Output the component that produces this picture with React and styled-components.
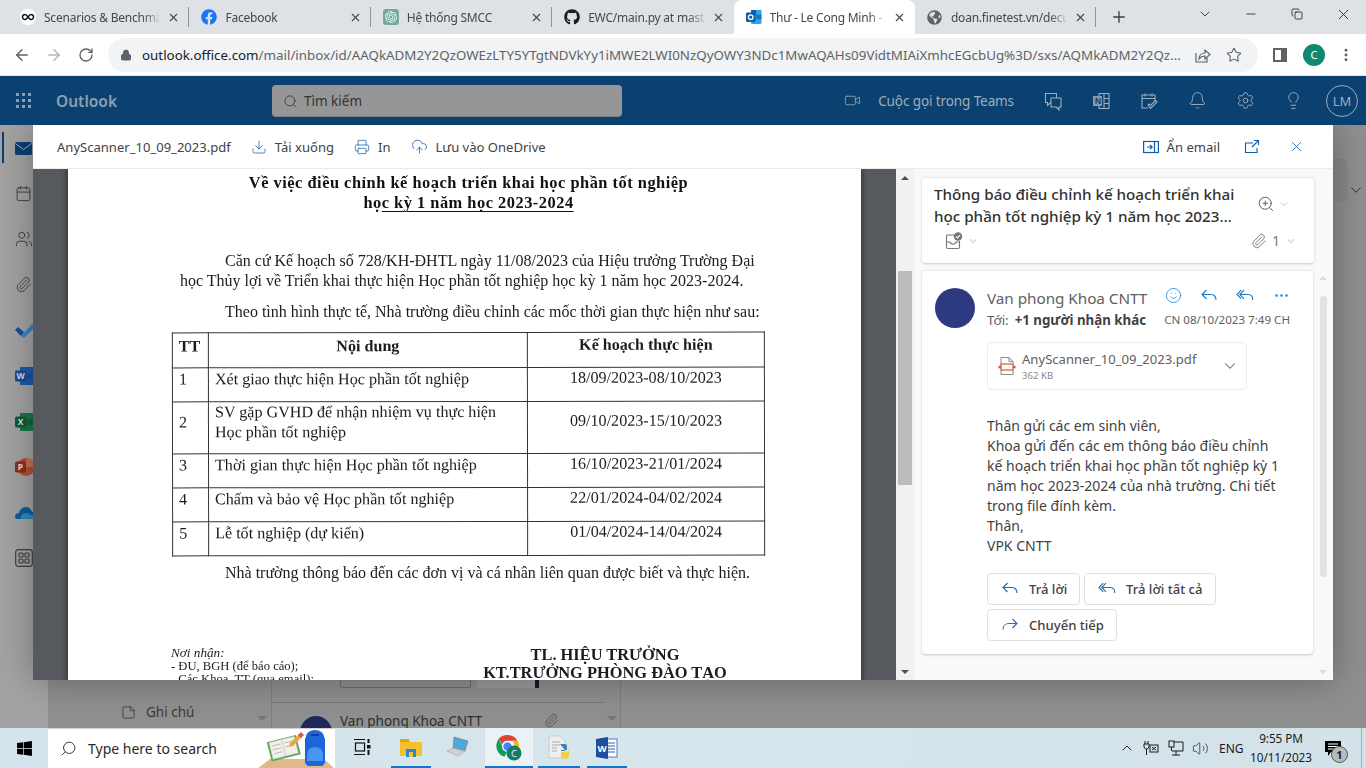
import React from "react";
import styled, { createGlobalStyle } from "styled-components";
import {
  ArrowLeft, ArrowRight, RotateCw, Lock, Star, Minus, X, Plus, Search, Video, Bell, Settings,
  Lightbulb, ChevronDown, ChevronUp, Download, Printer, CloudUpload, Paperclip, ZoomIn, Smile,
  MoreHorizontal, MoreVertical, Copy, Calendar, Users, StickyNote, Volume2,
} from "lucide-react";
import { FaFacebook, FaGithub, FaGlobeAmericas, FaWindows } from "react-icons/fa";
import { SiOpenai } from "react-icons/si";

const Global = createGlobalStyle`
  html, body { margin: 0; padding: 0; width: 1366px; height: 768px; overflow: hidden; background: #8c8c8c; }
  * { box-sizing: border-box; }
`;

const UI = `"Noto Sans", "Open Sans", sans-serif`;

const Screen = styled.div`
  width: 1366px; height: 768px; display: flex; flex-direction: column; overflow: hidden;
  font-family: ${UI};
`;

/* ---------- browser tabs ---------- */
const TabStrip = styled.div`
  height: 34px; background: #dee1e6; display: flex; align-items: stretch; padding-left: 8px; flex: none;
`;
const Tab = styled.div`
  width: 181.4px; display: flex; align-items: center; padding: 0 9px 0 12px; gap: 8px; position: relative;
  background: ${p => (p.$active ? "#fff" : "transparent")};
  border-radius: ${p => (p.$active ? "8px 8px 0 0" : "0")};
  &::after {
    content: ""; position: absolute; right: 0; top: 7px; bottom: 7px; width: 1px;
    background: ${p => (p.$sep ? "#8f9296" : "transparent")};
  }
`;
const FavSlot = styled.span`
  width: 16px; height: 16px; flex: none; display: flex; align-items: center; justify-content: center;
`;
const GptTile = styled.span`
  width: 16px; height: 16px; border-radius: 3px; background: #75a99c; color: #eef6f3; display: flex; align-items: center; justify-content: center;
`;
const TabTitle = styled.span`
  flex: 1; font-size: 12px; color: #45474a; white-space: nowrap; overflow: hidden; letter-spacing: -0.22px;
  -webkit-mask-image: linear-gradient(90deg, #000 86%, rgba(0,0,0,.15) 100%);
  mask-image: linear-gradient(90deg, #000 86%, rgba(0,0,0,.15) 100%);
`;
const NewTab = styled.div`
  width: 46px; display: flex; align-items: center; justify-content: center; color: #3c4043;
`;
const WinControls = styled.div`
  margin-left: auto; display: flex; align-items: center; color: #1f1f1f; height: 28px;
`;
const WinBtn = styled.div`
  width: 46px; display: flex; justify-content: center; align-items: center;
`;

/* ---------- address bar ---------- */
const AddressBar = styled.div`
  height: 42px; background: #fff; display: flex; align-items: center; flex: none; padding-left: 6px;
  border-bottom: 1px solid #e3e3e3;
`;
const NavBtn = styled.div`
  width: 32px; display: flex; justify-content: center; color: ${p => (p.$off ? "#b4b6b9" : "#5f6368")};
`;
const Omnibox = styled.div`
  margin-left: 6px; width: 1150px; height: 34px; border-radius: 17px; background: #f1f3f4;
  display: flex; align-items: center; padding: 0 2px 0 12px; font-size: 13.35px; color: #5f6368;
`;
const LockSlot = styled.div`
  width: 22px; flex: none; display: flex;
`;
const Url = styled.div`
  width: 1044px; flex: none; white-space: nowrap; overflow: hidden;
  b { font-weight: 400; color: #202124; }
`;
const OmniIcon = styled.div`
  width: 32px; display: flex; justify-content: center; color: #5f6368; flex: none;
`;
const SidePanelIcon = styled.div`
  margin-left: 15px; width: 14px; height: 14px; border: 2px solid #5f6368; border-right-width: 6px; flex: none;
`;
const Profile = styled.div`
  margin-left: 16px; width: 22px; height: 22px; border-radius: 50%; background: #0f8a70; color: #fff;
  display: flex; align-items: center; justify-content: center; font-size: 11px; flex: none;
`;
const Kebab = styled.div`
  margin-left: 9px; width: 24px; display: flex; justify-content: center; color: #5f6368;
`;

/* ---------- dimmed Outlook header ---------- */
const AppBar = styled.div`
  height: 49px; background: #0b4170; flex: none; display: flex; align-items: center; color: #a0aeba;
`;
const Waffle = styled.div`
  width: 48px; padding-left: 16px; display: grid; grid-template-columns: repeat(3, 3px); gap: 3px;
  span { width: 3px; height: 3px; background: #8d9dab; }
`;
const Brand = styled.div`
  width: 224px; padding-left: 8px; font-weight: 600; font-size: 15.5px; color: #8ea0af;
`;
const SearchBox = styled.div`
  width: 350px; height: 32px; background: #969696; border-radius: 4px; display: flex; align-items: center;
  gap: 6px; padding: 2px 0 0 11px; font-size: 13.5px; color: #333; border-bottom: 1px solid #7c7f82;
`;
const AppBarRight = styled.div`
  margin-left: auto; display: flex; align-items: center; padding-right: 8px;
`;
const TeamsCall = styled.div`
  display: flex; align-items: center; gap: 17px; font-size: 13.5px; margin-right: 15px; letter-spacing: -0.1px;
`;
const HeaderIcon = styled.div`
  width: 48px; display: flex; justify-content: center;
`;
const Initials = styled.div`
  width: 32px; height: 32px; border-radius: 50%; border: 1px solid #9aa9b5; font-size: 13px; margin-left: 9px;
  display: flex; align-items: center; justify-content: center;
`;

/* ---------- dimmed Outlook body ---------- */
const Body = styled.div`
  height: 603px; flex: none; position: relative; display: flex; background: #8f8f8f; overflow: hidden;
`;
const Rail = styled.div`
  width: 48px; flex: none; background: #a3a3a3; padding-top: 12px; display: flex; flex-direction: column;
  align-items: flex-start; padding-left: 15px; position: relative;
`;
const RailMark = styled.div`
  position: absolute; left: 2px; top: 7px; width: 2px; height: 31px; background: #0c4272;
`;
const RailIcon = styled.div`
  height: 22px; margin-bottom: 23.6px; display: flex; align-items: center; color: #3f3f3f;
`;
const NavPane = styled.div`
  width: 223px; flex: none; display: flex; align-items: flex-end; justify-content: space-between;
  padding: 0 4px 7px 73px; color: #3a3a3a; font-size: 13.5px;
`;
const NavNote = styled.div`
  display: flex; align-items: center; gap: 10px;
`;
const ArrowDown = styled.div`
  width: 0; height: 0; border: 5px solid transparent; border-top: 5px solid ${p => p.$c || "#777"}; margin-bottom: -5px; flex: none;
`;
const ListPane = styled.div`
  width: 350px; flex: none; border: 1px solid #808080; border-width: 0 1px; display: flex; flex-direction: column;
  justify-content: flex-end; overflow: hidden; position: relative;
`;
const ListAttach = styled.div`
  display: flex; gap: 6px; padding-left: 68px; height: 40px;
`;
const ListBox = styled.div`
  width: 131px; border: 1px solid #6e6e6e; height: 100%; border-radius: 2px;
`;
const ListThumb = styled.div`
  width: 62px; height: 100%; background: linear-gradient(90deg, #9c9c9c 0 93%, #141a2d 93%);
`;
const ListDivider = styled.div`
  margin: 14px 16px 0 0; height: 1px; background: #757575;
`;
const ListRow = styled.div`
  height: 25px; display: flex; gap: 8px; padding: 13px 0 0 28px; font-size: 13.5px; color: #2e2e2e; overflow: visible; line-height: 14px;
`;
const MiniAvatar = styled.div`
  width: 32px; height: 32px; border-radius: 50%; background: #1f2a5a; flex: none;
`;
const ListName = styled.span`
  width: 196px; white-space: nowrap; margin-top: -2px;
`;
const ListTail = styled.div`
  display: flex; gap: 48px; margin-top: -3px; color: #444;
`;
const ListArrow = styled.div`
  width: 0; height: 0; border: 5px solid transparent; border-top: 5px solid #777; margin-top: 3px; flex: none;
`;
const ReadPane = styled.div`
  flex: 1; display: flex; justify-content: flex-end; align-items: flex-start; gap: 1px;
`;
const DimPanel = styled.div`
  width: 46px; height: 41px; margin: 35px 0 0; border-radius: 4px; background: #8a8a8a; box-shadow: 0 0 2px rgba(0,0,0,.2);
`;
const DimChevron = styled.div`
  margin: 56px 1px 0 0; height: 18px; color: #2c2c2c;
`;
const ReadSpacer = styled.div`
  flex: 1;
`;

/* ---------- attachment modal ---------- */
const Modal = styled.div`
  position: absolute; left: 33px; top: 0; width: 1300px; height: 555px; background: #fff; display: flex; flex-direction: column;
  box-shadow: 0 0 34px rgba(0, 0, 0, .32); overflow: hidden;
`;
const ModalBar = styled.div`
  height: 44px; flex: none; display: flex; align-items: center; padding: 0 28px 0 24px; border-bottom: 1px solid #edebe9;
  font-size: 13.05px; color: #424242;
`;
const FileName = styled.span`
  margin-right: 20px;
`;
const BarAction = styled.div`
  display: flex; align-items: center; gap: ${p => p.$gap || 8}px; margin-right: ${p => p.$mr ?? 20}px; color: #424242;
  svg { color: #0f5ca8; flex: none; }
`;
const BarRight = styled.div`
  margin-left: auto; display: flex; align-items: center;
`;
const ModalMain = styled.div`
  flex: 1; display: flex; min-height: 0;
`;
const Viewer = styled.div`
  width: 863px; flex: none; background: #565a5e; display: flex; justify-content: center; overflow: hidden;
`;

/* ---------- scanned document ---------- */
const Paper = styled.div`
  width: 793px; height: 100%; background: #fff; padding: 4px 0 0 0; overflow: hidden; flex: none;
  font-family: "Liberation Serif", serif; color: #1c1c1c; box-shadow: -3px 0 3px rgba(0,0,0,.25), 3px 0 3px rgba(0,0,0,.25);
  filter: blur(0.25px);
`;
const DocTitle = styled.div`
  text-align: center; font-weight: 700; font-size: 16.4px; letter-spacing: .5px; line-height: 20px; color: #111;
  padding-left: 8px; white-space: nowrap;
  u { text-decoration-thickness: 1px; text-underline-offset: 3px; }
`;
const DocPara = styled.p`
  margin: ${p => p.$mt || 0}px 0 0 ${p => p.$ml}px; font-size: 16px; line-height: 20px; white-space: nowrap;
`;
const DocTable = styled.table`
  margin: 10px 0 0 104px; width: 592px; border-collapse: collapse; table-layout: fixed; font-size: 16.1px;
  transform: rotate(-0.08deg); line-height: 20px;
  td, th { border: 1px solid #333; padding: 0 6px 11px; vertical-align: middle; }
  th { font-weight: 700; text-align: center; padding-bottom: 8px; }
  th:first-child { text-align: left; }
  th:last-child { padding-bottom: 10px; }
`;
const Row = styled.tr`
  height: ${p => p.$h}px;
`;
const DateCell = styled.td`
  text-align: center; padding-bottom: 13px !important;
`;
const Sign = styled.div`
  margin-top: 63px; display: flex; font-size: 12.6px; line-height: 13.5px;
`;
const Recipients = styled.div`
  width: 300px; padding: 0 0 0 103px; white-space: nowrap;
  i { display: block; font-size: 13.2px; }
  span { display: block; }
`;
const Signer = styled.div`
  width: 300px; margin-left: 87px; text-align: center; font-weight: 700; font-size: 16.4px; line-height: 18px; white-space: nowrap;
`;

/* ---------- scrollbars ---------- */
const ScrollBar = styled.div`
  width: ${p => p.$w}px; flex: none; display: flex; flex-direction: column; align-items: center; background: ${p => p.$bg};
  justify-content: space-between; padding: ${p => p.$pad};
`;
const Thumb = styled.div`
  width: ${p => p.$w}px; height: ${p => p.$h}px; background: ${p => p.$c}; margin-top: ${p => p.$mt}px; border-radius: ${p => p.$r || 0}px; margin-bottom: auto;
`;
const ArrowUp = styled.div`
  width: 0; height: 0; border: 4px solid transparent; border-top: 0; border-bottom: 4px solid ${p => p.$c};
  flex: none;
`;
const ArrowDn = styled.div`
  width: 0; height: 0; border: 4px solid transparent; border-bottom: 0; border-top: 4px solid ${p => p.$c};
  flex: none;
`;

/* ---------- reading pane ---------- */
const Reading = styled.div`
  flex: 1; background: #faf9f8; display: flex; min-width: 0;
`;
const ReadingCol = styled.div`
  width: 399px; flex: none; padding: 9px 0 0 8px; display: flex; flex-direction: column; gap: 8px;
`;
const Card = styled.div`
  background: #fff; border-radius: 4px; box-shadow: 0 0.5px 2.5px rgba(0,0,0,.2); width: ${p => p.$w}px; flex: none;
`;
const SubjectCard = styled(Card)`
  height: 85px; padding: 5px 12px 0 12px; position: relative;
`;
const SubjectTop = styled.div`
  display: flex; justify-content: space-between;
`;
const Subject = styled.div`
  width: 302px; font-size: 15.2px; line-height: 22px; font-weight: 500; color: #323130;
  display: -webkit-box; -webkit-line-clamp: 2; -webkit-box-orient: vertical; overflow: hidden;
`;
const ZoomBox = styled.div`
  display: flex; align-items: center; gap: 3px; color: #424242; height: 44px; margin-right: 12px; margin-top: -1px;
`;
const SubjectMeta = styled.div`
  display: flex; justify-content: space-between; align-items: center; padding: 0 5px 0 11px; margin-top: 5px; color: #777; font-size: 13.5px;
`;
const MetaGroup = styled.div`
  display: flex; align-items: center; gap: ${p => p.$gap || 5}px;
`;
const MailCard = styled(Card)`
  height: 383px; padding: 17px 12px 0 13px;
`;
const SenderRow = styled.div`
  display: flex; gap: 12px;
`;
const Avatar = styled.div`
  width: 40px; height: 40px; border-radius: 50%; background: #2c3a82; flex: none;
`;
const SenderInfo = styled.div`
  flex: 1; min-width: 0; margin-top: -1px;
`;
const SenderTop = styled.div`
  display: flex; align-items: center; justify-content: space-between; height: 22px; white-space: nowrap;
`;
const SenderName = styled.span`
  font-size: 15.3px; color: #616161; letter-spacing: -0.05px;
`;
const Actions = styled.div`
  display: flex; color: #1b7cc9; margin: -4px 2px 0 0;
`;
const ActionBtn = styled.div`
  width: 36px; display: flex; justify-content: center;
`;
const SenderBottom = styled.div`
  display: flex; justify-content: space-between; align-items: center; font-size: 13.3px; color: #616161; white-space: nowrap; margin-top: 2px; line-height: 18px;
  b { color: #424242; font-weight: 700; margin-left: 6px; }
`;
const SentDate = styled.span`
  font-size: 11.6px; padding-right: 11px;
`;
const ToLabel = styled.span`
  font-size: 13.3px;
`;
const AttachCard = styled.div`
  margin: 13px 0 0 52px; width: 260px; height: 48px; border: 1px solid #ebebeb; border-radius: 4px; display: flex; align-items: center;
  padding: 0 7px 0 10px; gap: 6px;
`;
const AttachInfo = styled.div`
  flex: 1; min-width: 0;
`;
const AttachName = styled.div`
  font-size: 13.1px; color: #616161; line-height: 18px;
`;
const AttachSize = styled.div`
  font-size: 9.6px; color: #8a8886; line-height: 14px; margin-top: 1px;
`;
const MailBody = styled.div`
  margin: 26px 0 0 52px; width: 300px; font-size: 14px; line-height: 20px; color: #424242;
`;
const ReplyBar = styled.div`
  margin: 17px 0 0 52px; display: flex; flex-wrap: wrap; gap: 4px; width: 300px;
`;
const ReplyBtn = styled.div`
  height: 32px; border: 1px solid #e1dfdd; border-radius: 4px; display: flex; align-items: center; padding: 0 13px; gap: 10px;
  font-size: 13.1px; font-weight: 500; color: #424242; width: ${p => p.$w}px; white-space: nowrap;
  svg { color: #2b6aa8; flex: none; }
`;

/* ---------- windows taskbar ---------- */
const Taskbar = styled.div`
  height: 40px; flex: none; display: flex; align-items: stretch;
  background: linear-gradient(90deg, #d3e3eb, #d7e6ec 50%, #d3e2e9);
`;
const StartBtn = styled.div`
  width: 48px; display: flex; align-items: center; justify-content: center; color: #000; flex: none;
`;
const TaskSearch = styled.div`
  width: 287px; background: #fff; display: flex; align-items: center; padding-left: 12px; gap: 11px; flex: none;
  font-size: 14px; color: #2a2a2a; position: relative; border-top: 1px solid #d0d0d0; overflow: hidden;
`;
const FlipSearch = styled(Search)`
  transform: scaleX(-1);
`;
const Illustration = styled.div`
  margin-left: auto; height: 40px; width: 78px; flex: none;
`;
const TaskItem = styled.div`
  width: ${p => p.$w || 49}px; display: flex; align-items: center; justify-content: center; flex: none; margin-right: ${p => p.$mr || 0}px;
  background: ${p => (p.$on ? "#eaf2f5" : "transparent")};
  border-bottom: 2px solid ${p => (p.$run ? "#0a78d4" : "transparent")};
  padding: ${p => (p.$run ? "2px 0 0" : "0")};
`;
const Tray = styled.div`
  margin-left: auto; display: flex; align-items: center; color: #1b1b1b; font-size: 12px; height: 100%;
`;
const TrayIcon = styled.div`
  width: 24.5px; display: flex; justify-content: center;
`;
const Clock = styled.div`
  width: 64px; text-align: center; line-height: 19px; margin-left: 6px; font-size: 11.8px; letter-spacing: -0.1px;
`;
const Lang = styled.span`
  margin-left: 6px; width: 24px; font-size: 12px;
`;
const Notify = styled.div`
  width: 40px; height: 40px; display: flex; align-items: center; justify-content: center; position: relative; margin-right: 8px;
`;
const NotifyBadge = styled.span`
  position: absolute; left: 18px; top: 18px; width: 17px; height: 17px; border-radius: 50%; background: #b4bcc0; border: 1px solid #555;
  font-size: 11px; font-weight: 700; display: flex; align-items: center; justify-content: center; color: #222;
`;
const ShowDesktop = styled.div`
  width: 5px; height: 100%; border-left: 1px solid #9fb0b8;
`;

/* ---------- drawn icons ---------- */
const S = ({ s = 16, children, ...r }) => (
  <svg width={s} height={s} viewBox={`0 0 ${s} ${s}`} fill="none" stroke="currentColor" strokeWidth="1" {...r}>{children}</svg>
);
const InfinityFav = () => (
  <svg width="16" height="16" viewBox="0 0 16 16"><circle cx="8" cy="8" r="8" fill="#fff" /><path d="M8 8c-1.4-2-2-2.5-3-2.5a2.5 2.5 0 0 0 0 5c1 0 1.6-.5 3-2.5s2-2.5 3-2.5a2.5 2.5 0 0 1 0 5c-1 0-1.6-.5-3-2.5z" fill="none" stroke="#111" strokeWidth="1.5" /></svg>
);
const OutlookFav = () => (
  <svg width="16" height="16" viewBox="0 0 16 16">
    <rect x="5" y="1" width="10.5" height="14" rx="1" fill="#28a8ea" /><rect x="5" y="1" width="5.2" height="4.6" fill="#0364b8" /><rect x="10.2" y="5.6" width="5.3" height="4.6" fill="#14447d" opacity=".5" />
    <rect x="0" y="3.5" width="9.5" height="9.5" rx="1" fill="#0a5dab" /><circle cx="4.7" cy="8.2" r="2.3" fill="none" stroke="#fff" strokeWidth="1.3" />
  </svg>
);
const ReplyIcon = ({ s = 18 }) => (
  <svg width={s} height={s} viewBox="0 0 18 18" fill="none" stroke="currentColor" strokeWidth="1.1">
    <path d="M2 7.5h9c3 0 5 2.2 5 5.5" /><path d="M6.5 3 2 7.5 6.5 12" />
  </svg>
);
const ReplyAllIcon = ({ s = 18 }) => (
  <svg width={s} height={s} viewBox="0 0 18 18" fill="none" stroke="currentColor" strokeWidth="1.1">
    <path d="M4 7.5h8c3 0 4.8 2.2 4.8 5.5" /><path d="M8 3.2 3.8 7.5 8 11.8" /><path d="M5.2 3.2 1 7.5l4.2 4.3" />
  </svg>
);
const ForwardIcon = ({ s = 18 }) => (
  <svg width={s} height={s} viewBox="0 0 18 18" fill="none" stroke="currentColor" strokeWidth="1.1">
    <path d="M16 7.5H8c-3.2 0-6 2.2-6 6" /><path d="M11.5 3 16 7.5 11.5 12" />
  </svg>
);
const ShareIcon = () => (
  <S s={18} strokeWidth="1.2"><path d="M3 7v9h11v-4" /><path d="M6 13c0-4 3-6 6-6V4l5 4.5-5 4.5v-3c-2.500 0-4.500 1-6 3z" /></S>
);
const TeamsChat = () => (
  <S s={20} strokeWidth="1.1"><path d="M2.500 2.500h11v9h-6l-3 3v-3h-2z" /><path d="M8 7h10v9h-2v3l-3-3H8z" fill="#0b4170" /></S>
);
const OneNoteIcon = () => (
  <S s={20} strokeWidth="1.1"><rect x="8" y="2.500" width="10" height="15" /><path d="M13 2.500v15M13 7.500h5M13 12.500h5" /><rect x="2" y="5" width="9" height="10" fill="#8b97a2" stroke="none" /><text x="3.800" y="13" fontSize="8" fill="#0b4170" stroke="none" fontFamily="Noto Sans" fontWeight="700">N</text></S>
);
const TaskIcon = () => (
  <S s={20} strokeWidth="1.1"><path d="M9 17H3V4h13v6" /><path d="M3 7.500h13M6 2.500v3M13 2.500v3" /><path d="m9 14 2.500 3.500L18 11l-1.500-1.500-5 5-1.200-1.500z" /></S>
);
const PanelIcon = () => (
  <S s={16} strokeWidth="1.2"><rect x=".6" y="2.500" width="14.800" height="11" /><path d="M11.500 2.500v11" /><path d="M4 8h5M7 5.800 9.200 8 7 10.200" /></S>
);
const PopOut = () => (
  <S s={16} strokeWidth="1.1"><path d="M9 4H1.500v9.500H13V9" /><path d="M8 8l6-6M10 1.500h4.500V6" /></S>
);
const AppsIcon = () => (
  <S s={18} strokeWidth="1.2"><rect x=".7" y=".7" width="16.600" height="16.600" rx="2.500" /><rect x="4" y="4" width="4" height="4" rx="1" /><rect x="10" y="4" width="4" height="4" rx="1" /><rect x="4" y="10" width="4" height="4" rx="1" /><rect x="10" y="10" width="4" height="4" rx="1" /></S>
);
const Envelope = () => (
  <svg width="17" height="13" viewBox="0 0 17 13"><rect width="17" height="13" rx="1.500" fill="#0c3f74" /><path d="m0.500 1.500 8 6 8-6" fill="none" stroke="#9fb4c8" strokeWidth="1" /></svg>
);
const TodoIcon = () => (
  <svg width="20" height="16" viewBox="0 0 20 16"><path d="m0 8 3-3 6 5-3 4z" fill="#1a4d9e" /><path d="m6 14 11-12 3 3L9 16z" fill="#3b82c4" /></svg>
);
const OfficeTile = ({ bg, tile, l }) => (
  <svg width="20" height="20" viewBox="0 0 20 20">
    <rect x="5" y="1" width="15" height="18" rx="1" fill={bg} />
    <rect x="5" y="7" width="15" height="6" fill={tile} opacity=".7" />
    <rect x="0" y="4.500" width="11" height="11" rx="1.500" fill={tile} />
    <text x="5.500" y="13" fontSize="8.500" fontWeight="700" textAnchor="middle" fontFamily="Noto Sans" fill="#ddd">{l}</text>
  </svg>
);
const PptTile = () => (
  <svg width="20" height="20" viewBox="0 0 20 20">
    <circle cx="11" cy="10" r="9" fill="#a9513a" /><path d="M11 1a9 9 0 0 1 9 9h-9z" fill="#c76f55" />
    <rect x="0" y="4.500" width="11" height="11" rx="1.500" fill="#8f2f17" />
    <text x="5.500" y="13" fontSize="8.500" fontWeight="700" textAnchor="middle" fontFamily="Noto Sans" fill="#ddd">P</text>
  </svg>
);
const Cloud = () => (
  <svg width="20" height="13" viewBox="0 0 20 13"><path d="M0 10.500C0 8 2 7 4 7c1-4 4-6 7-6 3 0 5 2 6 5 2 0 3 2 3 4s-1 3-2 3H2c-1 0-2-1-2-2.500z" fill="#0a5d9e" /><path d="M6 13c-1-3 1-6 5-6 3 0 6 2 9 4 0 1-1 2-2 2z" fill="#2f86c0" /></svg>
);
const PdfIcon = () => (
  <svg width="18" height="20" viewBox="0 0 18 20" fill="none">
    <path d="M3 8V1.500h8l4 4V8M3 14v4.500h12V14" stroke="#8a8a8a" strokeWidth="1" /><path d="M11 1.500v4h4" stroke="#8a8a8a" strokeWidth="1" />
    <rect x="3" y="8" width="12" height="6" stroke="#d65532" strokeWidth="1.200" /><rect x=".5" y="9.800" width="2.500" height="2.500" fill="#d65532" /><rect x="15" y="9.800" width="2.500" height="2.500" fill="#d65532" />
  </svg>
);
const InboxCheck = () => (
  <svg width="18" height="18" viewBox="0 0 18 18" fill="none" stroke="#777" strokeWidth="1.100">
    <path d="M9 3H2.500a1 1 0 0 0-1 1v11a1.500 1.500 0 0 0 1.500 1.500h10a1.500 1.500 0 0 0 1.500-1.500V9" /><path d="M1.500 10H5c.5 1.500 2 2.200 3 2.200s2.500-.7 3-2.200h3.500" />
    <circle cx="13" cy="4.500" r="4.200" fill="#777" stroke="none" /><path d="m11 4.500 1.500 1.500 2.500-2.800" stroke="#fff" />
  </svg>
);
const TaskView = () => (
  <svg width="18" height="18" viewBox="0 0 18 18" fill="none" stroke="#111" strokeWidth="1.200">
    <path d="M0 1.500h11M0 16.500h11" /><rect x="1.500" y="5" width="9" height="8" /><path d="M14.500 1v4" strokeWidth="2" /><rect x="13" y="7" width="3.500" height="3.500" fill="#111" stroke="none" /><path d="M14.500 12v5" strokeWidth="2" />
  </svg>
);
const Explorer = () => (
  <svg width="24" height="24" viewBox="0 0 24 24"><path d="M1 4h9l2 2h11v14H1z" fill="#f4c02e" /><path d="M1 3h9v3H1z" fill="#e3a11a" /><path d="M7 13h10v8H7z" fill="#2a86d6" /><rect x="10" y="16" width="4" height="5" fill="#f4c02e" /></svg>
);
const Laptop = () => (
  <svg width="24" height="22" viewBox="0 0 24 22"><path d="M8 1l14 4-3 10-12-3z" fill="#4ea9dc" stroke="#777" strokeWidth=".6" /><path d="M1 15l6-3 12 3-7 5z" fill="#cfd2d4" stroke="#999" strokeWidth=".5" /></svg>
);
const ChromeLogo = () => (
  <svg width="28" height="28" viewBox="0 0 28 28">
    <path d="M12.500 1a11.500 11.500 0 0 1 10 5.800H12.500a5.700 5.700 0 0 0-5.300 3.700L3.500 5.100A11.500 11.500 0 0 1 12.500 1z" fill="#db4437" />
    <path d="M3.500 5.100 8 13a5 5 0 0 0 5 3l-3.600 6.800A11.500 11.500 0 0 1 3.500 5.100z" fill="#0f9d58" />
    <path d="M22.500 6.800A11.500 11.500 0 0 1 12.500 24l4.500-8a5.500 5.500 0 0 0 0-9.200z" fill="#f4b400" />
    <circle cx="12.500" cy="12.500" r="4.800" fill="#4285f4" stroke="#fff" strokeWidth="1.200" />
    <circle cx="19" cy="19" r="7.500" fill="#0f7f6c" /><text x="19" y="22.500" fontSize="9.500" textAnchor="middle" fill="#e8f3f1" fontFamily="Noto Sans">C</text>
  </svg>
);
const PyFile = () => (
  <svg width="24" height="26" viewBox="0 0 24 26">
    <path d="M2 1h11l5 5v17H2z" fill="#eee" stroke="#bbb" strokeWidth=".6" /><path d="M5 7h8M5 10h8M5 13h5M5 16h5" stroke="#aaa" />
    <path d="M13 9h5c1.500 0 2 1 2 2v4h-6v1h4v-1" fill="#3f7fb5" /><path d="M22 15v6c0 2-2 3-4 3s-4-1-4-3v-4h6z" fill="#f1cf4a" />
  </svg>
);
const WordApp = () => (
  <svg width="24" height="24" viewBox="0 0 24 24">
    <rect x="7" y="3" width="15" height="18" fill="#fff" stroke="#2b5fb0" strokeWidth=".8" /><path d="M13 7h7M13 10h7M13 13h7M13 16h7" stroke="#2b5fb0" />
    <path d="M1 3l12-2v22L1 21z" fill="#1f4e9e" /><text x="7" y="15.500" fontSize="9.500" fontWeight="700" textAnchor="middle" fill="#fff" fontFamily="Noto Sans">W</text>
  </svg>
);
const Backpack = () => (
  <svg width="78" height="40" viewBox="0 0 78 40">
    <path d="M0 40 13 30h54l11 10z" fill="#dfb98a" />
    <g transform="rotate(-14 28 20)"><rect x="12" y="9" width="30" height="20" fill="#5da653" /><path d="M14 10h13v17H14zM27 10h13v17H27z" fill="#f2f1e7" stroke="#c7c7c7" strokeWidth=".5" /><path d="M16 14h9M16 18h9M29 14h9M29 18h9M16 22h9" stroke="#aaa" strokeWidth=".7" /></g>
    <path d="m33 14 9-9 3 3-9 9-4 1z" fill="#f0a63c" /><path d="m41 6 3-3 3 3-3 3z" fill="#d9534f" />
    <path d="M49 8c0-4 4-7 9-7s9 3 9 7c1 1 1 2 1 4v20c0 3-2 5-4 5H52c-2 0-4-2-4-5V12c0-2 0-3 1-4z" fill="#1d66d8" />
    <path d="M50 27c0-6 3-9 8-9s8 3 8 9v5H50z" fill="#4a95ee" />
    <path d="M54 6h8" stroke="#0f3f99" strokeWidth="2" />
  </svg>
);

const tabs = [
  { t: "Scenarios & Benchma", i: <InfinityFav />, sep: true },
  { t: "Facebook", i: <FaFacebook size={16} color="#1877f2" />, sep: true },
  { t: "Hệ thống SMCC", i: <GptTile><SiOpenai size={12} /></GptTile>, sep: true },
  { t: "EWC/main.py at mast", i: <FaGithub size={16} color="#1c1c1c" /> },
  { t: "Thư - Le Cong Minh -", i: <OutlookFav />, active: true },
  { t: "doan.finetest.vn/decu", i: <FaGlobeAmericas size={15} color="#5f6368" />, sep: true },
];

const rows = [
  { n: "1", c: "Xét giao thực hiện Học phần tốt nghiệp", d: "18/09/2023-08/10/2023", h: 34 },
  { n: "2", c: <>SV gặp GVHD để nhận nhiệm vụ thực hiện<br />Học phần tốt nghiệp</>, d: "09/10/2023-15/10/2023", h: 52 },
  { n: "3", c: "Thời gian thực hiện Học phần tốt nghiệp", d: "16/10/2023-21/01/2024", h: 33 },
  { n: "4", c: "Chấm và bảo vệ Học phần tốt nghiệp", d: "22/01/2024-04/02/2024", h: 34 },
  { n: "5", c: "Lễ tốt nghiệp (dự kiến)", d: "01/04/2024-14/04/2024", h: 34 },
];

export default function App() {
  return (
    <Screen>
      <Global />
      <TabStrip>
        {tabs.map(t => (
          <Tab key={t.t} $active={t.active} $sep={t.sep}>
            <FavSlot>{t.i}</FavSlot>
            <TabTitle>{t.t}</TabTitle>
            <X size={13} strokeWidth={2} color="#45474a" />
          </Tab>
        ))}
        <NewTab><Plus size={18} strokeWidth={1.8} /></NewTab>
        <WinControls>
          <WinBtn><ChevronDown size={16} strokeWidth={1.2} /></WinBtn>
          <WinBtn><Minus size={14} strokeWidth={1.4} /></WinBtn>
          <WinBtn><Copy size={12} strokeWidth={1.6} /></WinBtn>
          <WinBtn><X size={17} strokeWidth={1.2} /></WinBtn>
        </WinControls>
      </TabStrip>

      <AddressBar>
        <NavBtn><ArrowLeft size={18} strokeWidth={2} /></NavBtn>
        <NavBtn $off><ArrowRight size={18} strokeWidth={2} /></NavBtn>
        <NavBtn><RotateCw size={16} strokeWidth={2} /></NavBtn>
        <Omnibox>
          <LockSlot><Lock size={12} fill="#5f6368" strokeWidth={2} /></LockSlot>
          <Url><b>outlook.office.com</b>/mail/inbox/id/AAQkADM2Y2QzOWEzLTY5YTgtNDVkYy1iMWE2LWI0NzQyOWY3NDc1MwAQAHs09VidtMIAiXmhcEGcbUg%3D/sxs/AQMkADM2Y2Qz...</Url>
          <OmniIcon><ShareIcon /></OmniIcon>
          <OmniIcon><Star size={16} strokeWidth={1.6} /></OmniIcon>
        </Omnibox>
        <SidePanelIcon />
        <Profile>C</Profile>
        <Kebab><MoreVertical size={16} strokeWidth={2.4} /></Kebab>
      </AddressBar>

      <AppBar>
        <Waffle>{Array.from({ length: 9 }, (_, i) => <span key={i} />)}</Waffle>
        <Brand>Outlook</Brand>
        <SearchBox><Search size={15} strokeWidth={1.3} />Tìm kiếm</SearchBox>
        <AppBarRight>
          <TeamsCall><Video size={17} strokeWidth={1.1} />Cuộc gọi trong Teams</TeamsCall>
          <HeaderIcon><TeamsChat /></HeaderIcon>
          <HeaderIcon><OneNoteIcon /></HeaderIcon>
          <HeaderIcon><TaskIcon /></HeaderIcon>
          <HeaderIcon><Bell size={19} strokeWidth={1.2} /></HeaderIcon>
          <HeaderIcon><Settings size={19} strokeWidth={1.2} /></HeaderIcon>
          <HeaderIcon><Lightbulb size={19} strokeWidth={1.2} /></HeaderIcon>
          <Initials>LM</Initials>
        </AppBarRight>
      </AppBar>

      <Body>
        <Rail>
          <RailMark />
          <RailIcon><Envelope /></RailIcon>
          <RailIcon><Calendar size={17} strokeWidth={1.3} /></RailIcon>
          <RailIcon><Users size={18} strokeWidth={1.3} /></RailIcon>
          <RailIcon><Paperclip size={17} strokeWidth={1.3} /></RailIcon>
          <RailIcon><TodoIcon /></RailIcon>
          <RailIcon><OfficeTile bg="#1d5ba8" tile="#1a4a96" l="W" /></RailIcon>
          <RailIcon><OfficeTile bg="#1c7548" tile="#0f5a34" l="X" /></RailIcon>
          <RailIcon><PptTile /></RailIcon>
          <RailIcon><Cloud /></RailIcon>
          <RailIcon><AppsIcon /></RailIcon>
        </Rail>
        <NavPane>
          <NavNote><StickyNote size={15} strokeWidth={1.3} />Ghi chú</NavNote>
          <ArrowDown $c="#777" />
        </NavPane>
        <ListPane>
          <ListAttach><ListBox /><ListThumb /></ListAttach>
          <ListDivider />
          <ListRow>
            <MiniAvatar />
            <ListName>Van phong Khoa CNTT</ListName>
            <ListTail><Paperclip size={15} strokeWidth={1.1} /><ListArrow /></ListTail>
          </ListRow>
        </ListPane>
        <ReadPane>
          <ReadSpacer />
          <DimPanel />
          <DimChevron><ChevronDown size={18} strokeWidth={1.3} /></DimChevron>
        </ReadPane>

        <Modal>
          <ModalBar>
            <FileName>AnyScanner_10_09_2023.pdf</FileName>
            <BarAction><Download size={16} strokeWidth={1.1} />Tải xuống</BarAction>
            <BarAction><Printer size={16} strokeWidth={1.1} />In</BarAction>
            <BarAction><CloudUpload size={17} strokeWidth={1.1} />Lưu vào OneDrive</BarAction>
            <BarRight>
              <BarAction $mr={24}><PanelIcon />Ẩn email</BarAction>
              <BarAction $mr={28}><PopOut /></BarAction>
              <BarAction $mr={0}><X size={17} strokeWidth={1.1} /></BarAction>
            </BarRight>
          </ModalBar>
          <ModalMain>
            <Viewer>
              <Paper>
                <DocTitle>Về việc điều chỉnh kế hoạch triển khai học phần tốt nghiệp</DocTitle>
                <DocTitle>họ<u>c kỳ 1 năm học 2023-2024</u></DocTitle>
                <DocPara $ml={157} $mt={38}>Căn cứ Kế hoạch số 728/KH-ĐHTL ngày 11/08/2023 của Hiệu trưởng Trường Đại</DocPara>
                <DocPara $ml={112}>học Thủy lợi về Triển khai thực hiện Học phần tốt nghiệp học kỳ 1 năm học 2023-2024.</DocPara>
                <DocPara $ml={157} $mt={11}>Theo tình hình thực tế, Nhà trường điều chỉnh các mốc thời gian thực hiện như sau:</DocPara>
                <DocTable>
                  <colgroup><col width="36" /><col width="319" /><col width="237" /></colgroup>
                  <tbody>
                    <Row $h={35}><th>TT</th><th>Nội dung</th><th>Kế hoạch thực hiện</th></Row>
                    {rows.map(r => (
                      <Row key={r.n} $h={r.h}><td>{r.n}</td><td>{r.c}</td><DateCell>{r.d}</DateCell></Row>
                    ))}
                  </tbody>
                </DocTable>
                <DocPara $ml={157} $mt={7}>Nhà trường thông báo đến các đơn vị và cá nhân liên quan được biết và thực hiện.</DocPara>
                <Sign>
                  <Recipients><i>Nơi nhận:</i><span>- ĐU, BGH (để báo cáo);</span><span>- Các Khoa, TT (qua email);</span></Recipients>
                  <Signer><div>TL. HIỆU TRƯỞNG</div><div>KT.TRƯỞNG PHÒNG ĐÀO TẠO</div></Signer>
                </Sign>
              </Paper>
            </Viewer>
            <ScrollBar $w={18} $bg="#f1f1f1" $pad="7px 0 6px">
              <ArrowUp $c="#505050" />
              <Thumb $w={14} $h={214} $c="#bcbcbc" $mt={91} />
              <ArrowDn $c="#505050" />
            </ScrollBar>
            <Reading>
              <ReadingCol>
                <SubjectCard $w={392}>
                  <SubjectTop>
                    <Subject>Thông báo điều chỉnh kế hoạch triển khai học phần tốt nghiệp kỳ 1 năm học 2023-2024</Subject>
                    <ZoomBox><ZoomIn size={18} strokeWidth={1.1} /><ChevronDown size={12} strokeWidth={1} color="#888" /></ZoomBox>
                  </SubjectTop>
                  <SubjectMeta>
                    <MetaGroup $gap={4}><InboxCheck /><ChevronDown size={12} strokeWidth={1} /></MetaGroup>
                    <MetaGroup $gap={5}><Paperclip size={16} strokeWidth={1.1} color="#555" />1<ChevronDown size={12} strokeWidth={1} /></MetaGroup>
                  </SubjectMeta>
                </SubjectCard>
                <MailCard $w={391}>
                  <SenderRow>
                    <Avatar />
                    <SenderInfo>
                      <SenderTop>
                        <SenderName>Van phong Khoa CNTT</SenderName>
                        <Actions>
                          <ActionBtn><Smile size={17} strokeWidth={1.1} /></ActionBtn>
                          <ActionBtn><ReplyIcon /></ActionBtn>
                          <ActionBtn><ReplyAllIcon /></ActionBtn>
                          <ActionBtn><MoreHorizontal size={17} strokeWidth={1.6} /></ActionBtn>
                        </Actions>
                      </SenderTop>
                      <SenderBottom>
                        <ToLabel>Tới:<b>+1 người nhận khác</b></ToLabel>
                        <SentDate>CN 08/10/2023 7:49 CH</SentDate>
                      </SenderBottom>
                    </SenderInfo>
                  </SenderRow>
                  <AttachCard>
                    <PdfIcon />
                    <AttachInfo>
                      <AttachName>AnyScanner_10_09_2023.pdf</AttachName>
                      <AttachSize>362 KB</AttachSize>
                    </AttachInfo>
                    <ChevronDown size={18} strokeWidth={1.4} color="#666" />
                  </AttachCard>
                  <MailBody>
                    Thân gửi các em sinh viên,<br />
                    Khoa gửi đến các em thông báo điều chỉnh kế hoạch triển khai học phần tốt nghiệp kỳ 1 năm học 2023-2024 của nhà trường. Chi tiết trong file đính kèm.<br />
                    Thân,<br />
                    VPK CNTT
                  </MailBody>
                  <ReplyBar>
                    <ReplyBtn $w={93}><ReplyIcon />Trả lời</ReplyBtn>
                    <ReplyBtn $w={132}><ReplyAllIcon />Trả lời tất cả</ReplyBtn>
                    <ReplyBtn $w={130}><ForwardIcon />Chuyển tiếp</ReplyBtn>
                  </ReplyBar>
                </MailCard>
              </ReadingCol>
              <ScrollBar $w={20} $bg="transparent" $pad="107px 0 6px">
                <ArrowUp $c="#dcdcdc" />
                <Thumb $w={7} $h={281} $c="#e3e3e3" $mt={16} $r={3} />
                <ArrowDn $c="#dcdcdc" />
              </ScrollBar>
            </Reading>
          </ModalMain>
        </Modal>
      </Body>

      <Taskbar>
        <StartBtn><FaWindows size={17} /></StartBtn>
        <TaskSearch>
          <FlipSearch size={17} strokeWidth={1.3} />
          Type here to search
          <Illustration><Backpack /></Illustration>
        </TaskSearch>
        <TaskItem $w={56}><TaskView /></TaskItem>
        <TaskItem $w={40} $run><Explorer /></TaskItem>
        <TaskItem $w={54}><Laptop /></TaskItem>
        <TaskItem $w={48} $run $on $mr={5}><ChromeLogo /></TaskItem>
        <TaskItem $w={42} $run $mr={7}><PyFile /></TaskItem>
        <TaskItem $w={40} $run><WordApp /></TaskItem>
        <Tray>
          <TrayIcon><ChevronUp size={16} strokeWidth={1.4} /></TrayIcon>
          <TrayIcon>
            <S s={18} strokeWidth="1"><path d="M2 2v3M5 2v3M1 5h5v3l-1.500 2H2.500L1 8zM3.500 10v6" /><rect x="7" y="6" width="8" height="7" /><path d="m9 8 4 3M13 8l-4 3" /></S>
          </TrayIcon>
          <TrayIcon>
            <S s={18} strokeWidth="1"><rect x="2" y="2" width="5" height="6" /><path d="M7 3h9v9H5M9 12v4M5 16h8M4.500 8v4" /></S>
          </TrayIcon>
          <TrayIcon><Volume2 size={17} strokeWidth={1} /></TrayIcon>
          <Lang>ENG</Lang>
          <Clock>9:55 PM<br />10/11/2023</Clock>
          <Notify>
            <svg width="16" height="15" viewBox="0 0 16 15"><path d="M0 0h16v11H6l-3 4v-4H0z" fill="#000" /><path d="M3 3h10M3 5.500h10M3 8h7" stroke="#fff" /></svg>
            <NotifyBadge>1</NotifyBadge>
          </Notify>
          <ShowDesktop />
        </Tray>
      </Taskbar>
    </Screen>
  );
}
